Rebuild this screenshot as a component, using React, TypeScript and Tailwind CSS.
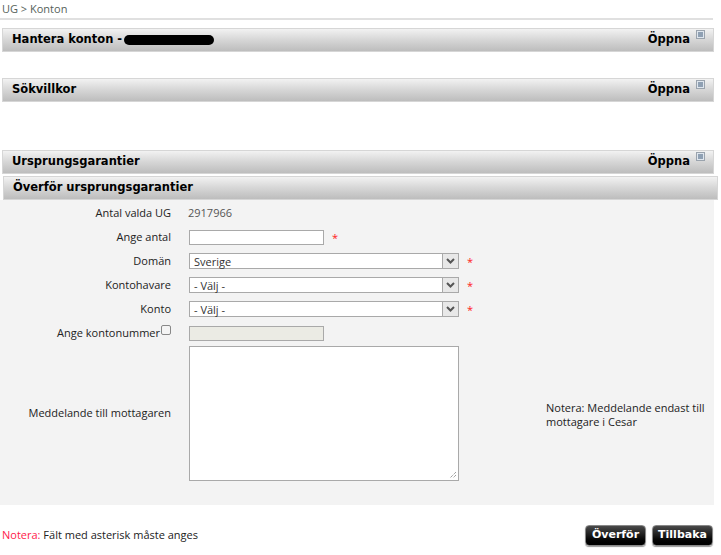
import React from "react";

const barCls =
  "flex items-center justify-between h-[24px] pl-[9px] pr-[8px] border border-[#d6d6d6] bg-gradient-to-b from-[#f2f2f2] via-[#d6d6d6] to-[#bdbdbd] font-['DejaVu_Sans',sans-serif] font-bold text-[11.5px] text-black";

function PlusIcon() {
  return (
    <span className="ml-[6px] -mt-[12px] inline-flex items-center justify-center w-[9px] h-[9px] border border-[#9aa3ad] bg-[#dfe6ee]">
      <span className="block w-[5px] h-[5px] bg-[#8fa0b3]" />
    </span>
  );
}

function Bar({ title, open, children }: { title: string; open?: boolean; children?: React.ReactNode }) {
  return (
    <div className={barCls}>
      <span className="flex items-center">
        {title}
        {children}
      </span>
      {open && (
        <span className="flex items-center">
          Öppna
          <PlusIcon />
        </span>
      )}
    </div>
  );
}

function Select({ value }: { value: string }) {
  return (
    <div className="flex items-center w-[270px] h-[16px] border border-[#a9a9a9] bg-white">
      <span className="flex-1 pl-[4px] text-[11px] text-[#333] leading-none">{value}</span>
      <span className="flex items-center justify-center w-[16px] h-full border-l border-[#a9a9a9] bg-[#e8e8e8]">
        <svg width="9" height="6" viewBox="0 0 9 6">
          <path d="M1 1 L4.5 4.5 L8 1" stroke="#555" strokeWidth="2" fill="none" />
        </svg>
      </span>
    </div>
  );
}

function Star() {
  return <span className="text-[#ff2020] text-[11px] leading-none">*</span>;
}

function Row({ label, children }: { label: React.ReactNode; children: React.ReactNode }) {
  return (
    <div className="flex items-center h-[24px]">
      <div className="w-[171px] text-right text-[#222]">{label}</div>
      <div className="flex items-center pl-[18px] gap-[8px]">{children}</div>
    </div>
  );
}

export default function App() {
  return (
    <div className="w-[721px] h-[555px] bg-white font-['Open_Sans',sans-serif] text-[11px] text-[#222]">
      <div className="pl-[2px] pt-[1px] h-[18px] text-[11px] text-[#55625a]">UG &gt; Konton</div>
      <div className="w-[713px] h-[2px] bg-[#e0e0e0]" />
      <div className="w-[714px] mt-[8px] pl-[2px]">
        <Bar title="Hantera konton -" open>
          <span className="inline-block w-[90px] h-[10px] bg-black rounded-[5px] ml-[2px]" />
        </Bar>
        <div className="h-[26px]" />
        <Bar title="Sökvillkor" open />
        <div className="h-[48px]" />
        <Bar title="Ursprungsgarantier" open />
        <div className="mt-[2px] ml-[1px] w-[715px]">
          <Bar title="Överför ursprungsgarantier" />
        </div>
      </div>
      <div className="w-[714px] h-[305px] bg-[#f3f3f3] pt-[1px]">
        <Row label="Antal valda UG">
          <span className="text-[#555] -ml-[1px]">2917966</span>
        </Row>
        <Row label="Ange antal">
          <span className="block w-[135px] h-[15px] border border-[#a9a9a9] bg-white" />
          <Star />
        </Row>
        <Row label="Domän">
          <Select value="Sverige" />
          <Star />
        </Row>
        <Row label="Kontohavare">
          <Select value="- Välj -" />
          <Star />
        </Row>
        <Row label="Konto">
          <Select value="- Välj -" />
          <Star />
        </Row>
        <Row
          label={
            <span className="inline-flex items-center">
              Ange kontonummer
              <span className="-mt-[6px] ml-[1px] inline-block w-[10px] h-[10px] border border-[#888] rounded-[2px] bg-[#f4f4f4]" />
            </span>
          }
        >
          <span className="block w-[135px] h-[15px] border border-[#a9a9a9] bg-[#ebebe4]" />
        </Row>
        <div className="flex items-center mt-[1px]">
          <div className="w-[171px] text-right">Meddelande till mottagaren</div>
          <div className="pl-[18px]">
            <div className="relative w-[270px] h-[135px] border border-[#a9a9a9] bg-white">
              <svg className="absolute right-[1px] bottom-[1px]" width="8" height="8" viewBox="0 0 8 8">
                <path d="M7 1 L1 7 M7 4 L4 7" stroke="#777" strokeWidth="1" strokeDasharray="1 1" />
              </svg>
            </div>
          </div>
          <div className="pl-[87px] leading-[14px] text-[#222] whitespace-nowrap mt-[2px]">
            Notera: Meddelande endast till
            <br />
            mottagare i Cesar
          </div>
        </div>
      </div>
      <div className="flex items-center justify-between w-[713px] mt-[20px] pl-[2px]">
        <span>
          <span className="text-[#ff1a4a]">Notera:</span> Fält med asterisk måste anges
        </span>
        <div className="flex gap-[6px]">
          {["Överför", "Tillbaka"].map((t) => (
            <span
              key={t}
              className="flex items-center justify-center w-[61px] h-[21px] rounded-[4px] border border-[#888] bg-gradient-to-b from-[#4a4a4a] via-[#1a1a1a] to-[#000] text-white font-['DejaVu_Sans',sans-serif] font-bold text-[11px] shadow-[0_1px_1px_rgba(0,0,0,0.4)]"
            >
              {t}
            </span>
          ))}
        </div>
      </div>
    </div>
  );
}
